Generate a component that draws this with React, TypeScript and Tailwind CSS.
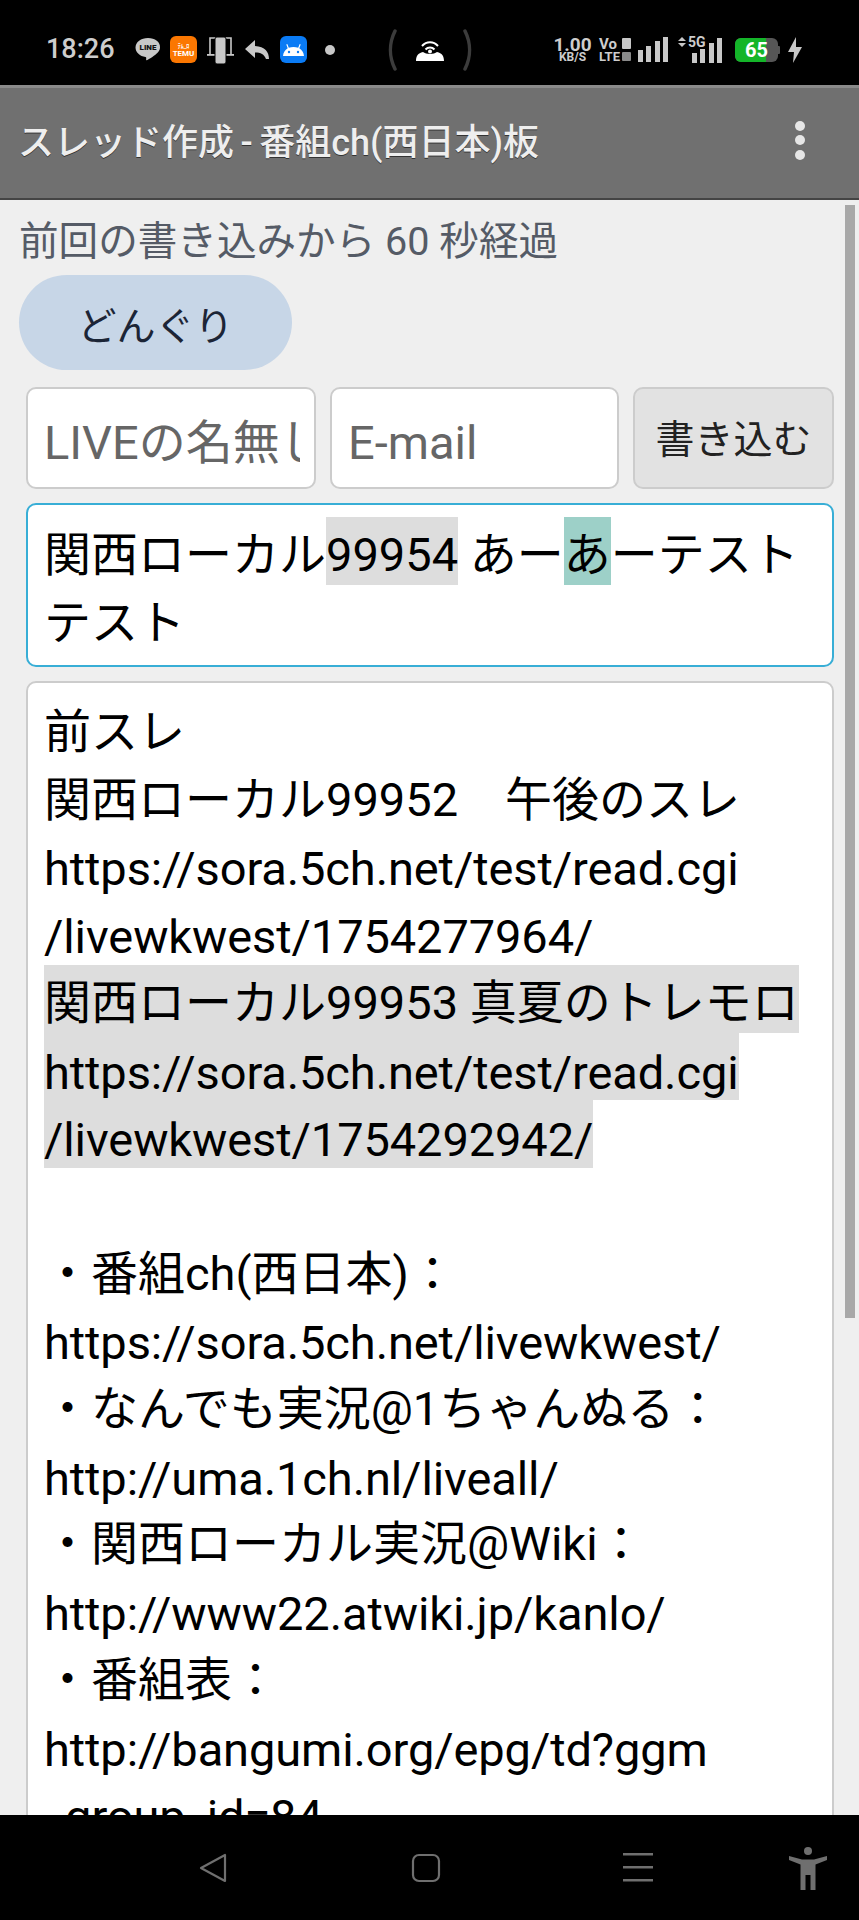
import React from "react";

const FONT = "font-['Roboto','Noto_Sans_CJK_JP',sans-serif]";

const bodyLines = [
  { text: "前スレ" },
  { text: "関西ローカル99952　午後のスレ" },
  { text: "https://sora.5ch.net/test/read.cgi", url: true },
  { text: "/livewkwest/1754277964/", url: true },
  { text: "関西ローカル99953 真夏のトレモロ", hl: true },
  { text: "https://sora.5ch.net/test/read.cgi", hl: true, url: true },
  { text: "/livewkwest/1754292942/", hl: true, url: true },
  { text: "\u00a0" },
  { text: "・番組ch(西日本)：" },
  { text: "https://sora.5ch.net/livewkwest/", url: true },
  { text: "・なんでも実況@1ちゃんぬる：" },
  { text: "http://uma.1ch.nl/liveall/", url: true },
  { text: "・関西ローカル実況@Wiki：" },
  { text: "http://www22.atwiki.jp/kanlo/", url: true },
  { text: "・番組表：" },
  { text: "http://bangumi.org/epg/td?ggm", url: true },
  { text: "_group_id=84", url: true },
];

const Bars = ({ className }: { className?: string }) => (
  <svg width="30" height="25" viewBox="0 0 30 25" className={className} fill="#c8c8c8">
    <rect x="0" y="13" width="5" height="12" />
    <rect x="8" y="9" width="5" height="16" />
    <rect x="17" y="4" width="5" height="21" />
    <rect x="25" y="0" width="5" height="25" />
  </svg>
);

const StatusBar = () => (
  <div className="flex h-[85px] shrink-0 items-center bg-black pl-[46px] pt-[14px] text-[#cdcdcd]">
    <span className="w-[69px] text-[27px] font-medium leading-none">18:26</span>
    {/* LINE */}
    <div className="relative ml-[20px] h-[26px] w-[26px]">
      <svg width="26" height="26" viewBox="0 0 26 26" fill="#c8c8c8">
        <path d="M13 1C6 1 .5 5 .5 10.5c0 5 4.5 8.8 10 9.5.9.2.8 1 .6 2.5-.1.8.4 1.1 1.200.6 2-1.200 8-4.800 10.500-7.600 1.500-1.600 2.200-3.200 2.200-5C25.500 5 20 1 13 1z" />
      </svg>
      <span className="absolute left-0 top-[6px] w-full text-center text-[8px] font-black leading-[9px] text-[#111]">LINE</span>
    </div>
    {/* TEMU */}
    <div className="ml-[9px] flex h-[27px] w-[27px] flex-col items-center justify-center rounded-[6px] bg-[#fb7701] text-white">
      <span className="text-[6px] font-bold leading-[7px]">ﾃﾑ_ﾛ</span>
      <span className="text-[8px] font-bold leading-[9px]">TEMU</span>
    </div>
    {/* phone on a stand */}
    <svg width="27" height="28" viewBox="0 0 27 28" className="ml-[10px]" fill="none">
      <path d="M3 19V2h21v17" stroke="#c8c8c8" strokeWidth="1.600" />
      <rect x="0" y="18" width="27" height="1.800" fill="#c8c8c8" />
      <rect x="8" y="1" width="11" height="27" rx="2" fill="#c8c8c8" stroke="#000" strokeWidth="1" />
    </svg>
    {/* reply */}
    <svg width="24" height="20" viewBox="0 0 24 20" className="ml-[11px]" fill="#c8c8c8">
      <path d="M10 0 0 9l10 9v-5.500c6 0 9 1.500 11 6.500h3c0-7-4-12.500-14-13V0z" />
    </svg>
    {/* android */}
    <div className="ml-[11px] flex h-[27px] w-[27px] items-center justify-center rounded-[6px] bg-[#0a7bf5]">
      <svg width="21" height="14" viewBox="0 0 21 14" fill="#fff">
        <path d="M0 13c.3-3.400 2-6.200 4.700-7.800L3.300 1.400l1-.4 1.500 3.800C7.300 4.300 8.900 4 10.500 4s3.200.3 4.700.8L16.700 1l1 .4-1.400 3.800C19 6.800 20.700 9.600 21 13z" />
        <circle cx="6" cy="9" r="1.200" fill="#0a7bf5" />
        <circle cx="15" cy="9" r="1.200" fill="#0a7bf5" />
      </svg>
    </div>
    <div className="ml-[18px] h-[10px] w-[10px] rounded-full bg-[#c8c8c8]" />
    {/* hotspot pill */}
    <svg width="12" height="42" viewBox="0 0 12 42" className="ml-[51px]" fill="none">
      <path d="M9 2C3 14 3 28 9 40" stroke="#3c3c3c" strokeWidth="3.500" strokeLinecap="round" />
    </svg>
    <svg width="28" height="22" viewBox="0 0 28 22" className="ml-[18px]" fill="none">
      <path d="M6 7c4.500-5 11.500-5 16 0" stroke="#fff" strokeWidth="2" />
      <path d="M9.500 10.500c2.500-2.800 6.500-2.800 9 0" stroke="#fff" strokeWidth="2" />
      <path d="M0 22c0-5 2-8 7-9 3 2.500 11 2.500 14 0 5 1 7 4 7 9z" fill="#fff" />
      <circle cx="14" cy="12.500" r="2" fill="#fff" />
    </svg>
    <svg width="12" height="42" viewBox="0 0 12 42" className="ml-[18px]" fill="none">
      <path d="M3 2c6 12 6 26 0 38" stroke="#3c3c3c" strokeWidth="3.500" strokeLinecap="round" />
    </svg>
    {/* speed */}
    <div className="ml-[80px] flex w-[37px] flex-col items-center font-bold">
      <span className="text-[19px] leading-[15px]">1.00</span>
      <span className="text-[12px] leading-[11px]">KB/S</span>
    </div>
    <div className="ml-[8px] flex w-[32px] flex-col font-bold">
      <div className="flex items-center justify-between">
        <span className="text-[15px] leading-[14px]">Vo</span>
        <span className="h-[11px] w-[9px] rounded-[1px] bg-[#c8c8c8]" />
      </div>
      <div className="flex items-center justify-between">
        <span className="text-[13px] leading-[12px]">LTE</span>
        <span className="h-[9px] w-[9px] rounded-[1px] bg-[#8a8a8a]" />
      </div>
    </div>
    <Bars className="ml-[7px]" />
    <div className="relative ml-[10px] h-[26px] w-[44px]">
      <svg width="8" height="10" viewBox="0 0 8 10" className="absolute left-0 top-0" fill="#c8c8c8">
        <path d="M4 0 8 4H0zM4 10 0 6h8z" />
      </svg>
      <span className="absolute left-[10px] top-[-1px] text-[14px] font-bold leading-[13px]">5G</span>
      <svg width="30" height="25" viewBox="0 0 30 25" className="absolute bottom-0 right-0" fill="#c8c8c8">
        <rect x="0" y="15" width="5" height="10" />
        <rect x="8" y="11" width="5" height="14" />
        <rect x="17" y="5" width="5" height="20" />
        <rect x="25" y="0" width="5" height="25" />
      </svg>
    </div>
    {/* battery */}
    <div className="ml-[13px] flex items-center">
      <div className="relative flex h-[24px] w-[43px] items-center justify-center overflow-hidden rounded-[6px] bg-[#565656]">
        <div className="absolute inset-y-0 left-0 w-[31px] bg-[#14b529]" />
        <span className="relative text-[20px] font-bold leading-none text-white">65</span>
      </div>
      <div className="h-[8px] w-[2px] rounded-r-[1px] bg-[#565656]" />
    </div>
    <svg width="14" height="26" viewBox="0 0 14 26" className="ml-[8px]" fill="#c8c8c8">
      <path d="M8 0 0 15h6l-1 11 9-16H8z" />
    </svg>
  </div>
);

const NavBar = () => (
  <div className="flex h-[105px] shrink-0 items-start bg-black pl-[199px] pt-[38px]">
    <svg width="28" height="30" viewBox="0 0 28 30" fill="none" stroke="#6f6f6f" strokeWidth="2.200" strokeLinejoin="round">
      <path d="M26 2v26L2 15z" />
    </svg>
    <svg width="30" height="30" viewBox="0 0 30 30" className="ml-[184px]" fill="none" stroke="#6f6f6f" strokeWidth="2.200">
      <rect x="2" y="2" width="26" height="26" rx="6" />
    </svg>
    <svg width="30" height="30" viewBox="0 0 30 30" className="ml-[182px]" fill="#6f6f6f">
      <rect x="0" y="0" width="30" height="2.500" />
      <rect x="0" y="13" width="30" height="2.500" />
      <rect x="0" y="26" width="30" height="2.500" />
    </svg>
    <svg width="38" height="43" viewBox="0 0 38 43" className="ml-[136px] mt-[-6px]" fill="#6f6f6f">
      <circle cx="19" cy="4" r="4" />
      <path d="M0 9 13 12.500h12L38 9v4l-11.500 4.500V43h-5V28h-5v15h-5V17.500L0 13z" />
    </svg>
  </div>
);

export default function App() {
  return (
    <div className={`flex h-[1920px] w-[859px] flex-col overflow-hidden bg-[#efefef] ${FONT}`}>
      <StatusBar />

      <div className="flex h-[115px] shrink-0 items-center justify-between border-t-[3px] border-b-[2px] border-t-[#8a8a8a] border-b-[#444444] bg-[#707070] pl-[18px] pr-[54px]">
        <h1 className="text-[36px] font-medium text-[#eeeeee] [text-shadow:0_1px_0_#333] [word-spacing:-2.500px]">スレッド作成 - 番組ch(西日本)板</h1>
        <div className="mb-[6px] flex flex-col gap-[4.500px]">
          <span className="h-[10px] w-[10px] rounded-full bg-[#e6e6e6]" />
          <span className="h-[10px] w-[10px] rounded-full bg-[#e6e6e6]" />
          <span className="h-[10px] w-[10px] rounded-full bg-[#e6e6e6]" />
        </div>
      </div>

      <div className="relative min-h-0 flex-1 overflow-hidden">
        <div className="absolute right-[4px] top-[5px] h-[1113px] w-[10px] bg-[#a8a8a8]" />

        <p className="pl-[19px] pt-[14px] text-[39.600px] leading-[56px] text-[#555b66]">前回の書き込みから 60 秒経過</p>

        <button className="ml-[19px] mt-[5px] flex h-[95px] w-[273px] items-center justify-center rounded-full bg-[#c7d6e7] pt-[10px] text-[39px] text-[#1c2536]">
          どんぐり
        </button>

        <div className="ml-[26px] mt-[17px] flex w-[808px] gap-[14px]">
          <input
            className="h-[102px] w-[290px] rounded-[10px] border-[2.500px] border-[#cccccc] bg-white pl-[16px] pr-[14px] pt-[9px] text-[47px] outline-none placeholder:text-[#666666]"
            placeholder="LIVEの名無し"
          />
          <input
            className="h-[102px] w-[289px] rounded-[10px] border-[2.500px] border-[#cccccc] bg-white pl-[16px] pr-[14px] pt-[9px] text-[47px] outline-none placeholder:text-[#666666]"
            placeholder="E-mail"
          />
          <button className="h-[102px] w-[201px] rounded-[10px] border-[2.500px] border-[#cccccc] bg-[#e2e2e2] pt-[5px] text-[39px] text-[#222222]">
            書き込む
          </button>
        </div>

        <div className="ml-[26px] mt-[14px] h-[164px] w-[808px] rounded-[10px] border-[2.500px] border-[#38aed6] bg-white pl-[16px] pt-[12px] text-[47px] leading-[59.700px] text-black">
          <div className="pt-[8px]">
            関西ローカル<span className="-mt-[8px] inline-block bg-[#dddddd] pt-[8px]">99954</span> あー
            <span className="-mt-[8px] inline-block bg-[#9dd0c8] pt-[8px]">あ</span>ーテスト
          </div>
          <div className="pt-[8px]">テスト</div>
        </div>

        <div className="ml-[26px] mt-[14px] h-[1200px] w-[808px] rounded-[10px] border-[2.500px] border-[#cccccc] bg-white pl-[16px] pt-[11px] text-[47px] leading-[59.700px] text-black">
          {bodyLines.map((line, i) => (
            <div
              key={i}
              className={`whitespace-nowrap ${line.url ? "pt-[12px] leading-[55.700px] tracking-[-0.1px]" : "pt-[8px]"} ${line.hl ? "w-fit bg-[#dddddd]" : ""}`}
            >
              {line.text}
            </div>
          ))}
        </div>
      </div>

      <NavBar />
    </div>
  );
}
